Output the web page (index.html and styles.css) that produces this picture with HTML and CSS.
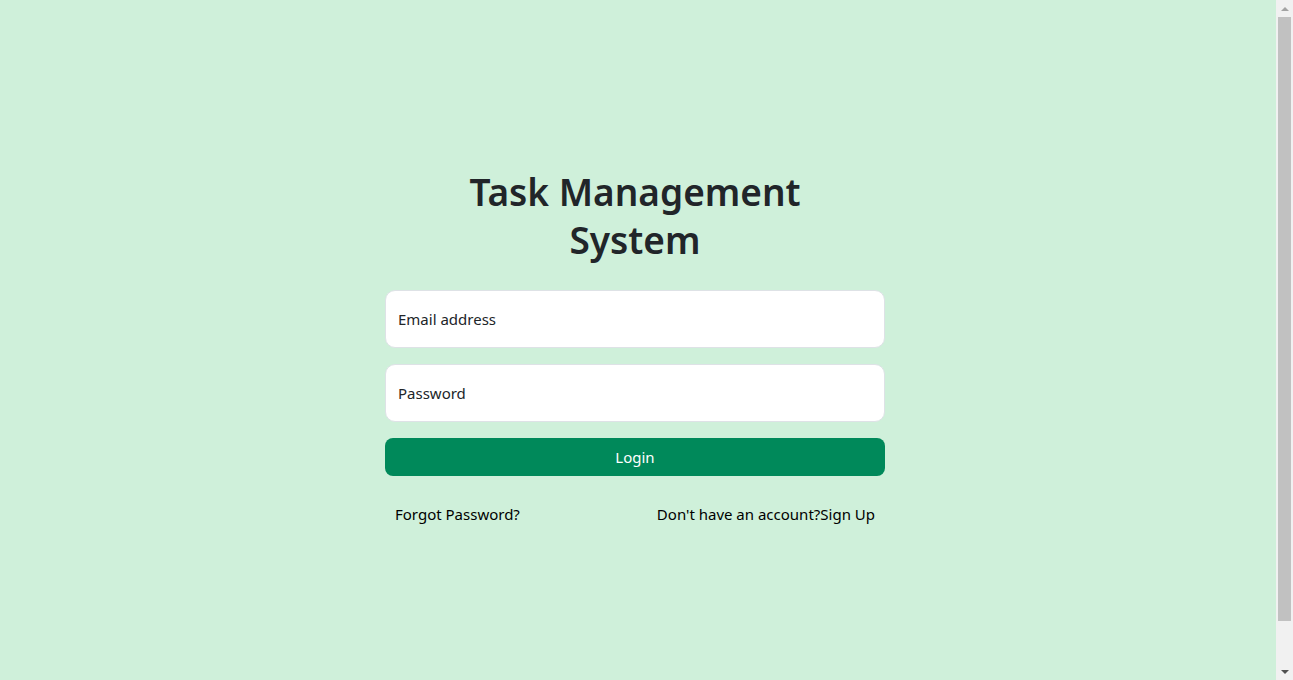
FILE: index.html
```html
<!DOCTYPE html>
<html lang="en">
<head>
<meta charset="utf-8">
<title>Task Management System</title>
<link rel="stylesheet" href="styles.css">
</head>
<body>
<div class="page">
  <main class="main">
    <div class="login">
      <h1 class="title">Task Management System</h1>
      <form class="form">
        <div class="field"><span class="placeholder">Email address</span></div>
        <div class="field"><span class="placeholder">Password</span></div>
        <button type="button" class="btn">Login</button>
        <div class="links">
          <a class="link">Forgot Password?</a>
          <a class="link">Don't have an account?Sign Up</a>
        </div>
      </form>
    </div>
  </main>
  <div class="scrollbar">
    <div class="arrow up"></div>
    <div class="thumb-wrap"><div class="thumb"></div></div>
    <div class="arrow down"></div>
  </div>
</div>
</body>
</html>
```
FILE: styles.css
```css
* { box-sizing: border-box; }
html, body { margin: 0; padding: 0; height: 100%; }
body {
  font-family: "Noto Sans", "Open Sans", sans-serif;
  background: #cff0da;
  color: #212529;
}
.page {
  display: flex;
  height: 680px;
}
.main {
  flex: 1;
  display: flex;
  justify-content: center;
  padding-right: 6px;
  padding-top: 168px;
}
.login {
  width: 500px;
  display: flex;
  flex-direction: column;
  align-items: center;
}
.title {
  margin: 0 0 26px;
  max-width: 400px;
  text-align: center;
  font-size: 37px;
  line-height: 48px;
  font-weight: 600;
  color: #212529;
}
.form {
  width: 100%;
  display: flex;
  flex-direction: column;
}
.field {
  height: 58px;
  background: #fff;
  border: 1px solid #dee2e6;
  border-radius: 10px;
  padding: 0 12px;
  display: flex;
  align-items: center;
  margin-bottom: 16px;
  font-size: 15px;
}
.placeholder { color: #212529; }
.btn {
  height: 38px;
  border: none;
  border-radius: 8px;
  background: #00895a;
  color: #fff;
  font-family: inherit;
  font-size: 15px;
  padding: 0;
}
.links {
  display: flex;
  justify-content: space-between;
  padding: 26px 10px 0;
  font-size: 15px;
  line-height: 24px;
}
.link { color: #000; text-decoration: none; }
.scrollbar {
  width: 17px;
  background: #f1f1f1;
  display: flex;
  flex-direction: column;
}
.arrow {
  height: 17px;
  display: flex;
  align-items: center;
  justify-content: center;
}
.arrow::before {
  content: "";
  width: 0;
  height: 0;
  border-left: 4px solid transparent;
  border-right: 4px solid transparent;
}
.arrow.up::before { border-bottom: 4px solid #a3a3a3; }
.arrow.down::before { border-top: 4px solid #505050; }
.thumb-wrap {
  flex: 1;
  padding: 0 2px 42px;
}
.thumb {
  height: 100%;
  background: #c1c1c1;
}
```
